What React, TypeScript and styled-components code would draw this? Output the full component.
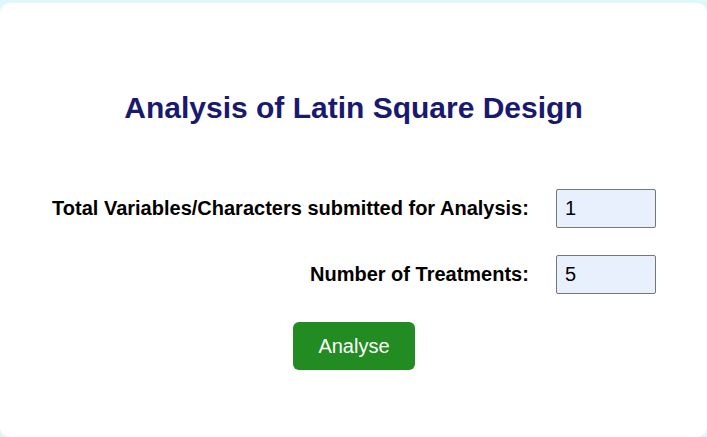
import React, { useState } from 'react';
import styled, { createGlobalStyle } from 'styled-components';

const GlobalStyle = createGlobalStyle`
  html, body {
    margin: 0;
    padding: 0;
    background: #e0f7fa;
    font-family: "Liberation Sans", Arial, sans-serif;
  }
`;

const Page = styled.div`
  padding-top: 3px;
`;

const Card = styled.div`
  background: #ffffff;
  border-radius: 10px;
  height: 434px;
  box-sizing: border-box;
  padding-top: 88px;
  display: flex;
  flex-direction: column;
  align-items: center;
`;

const Title = styled.h1`
  margin: 0;
  font-size: 30px;
  line-height: 34px;
  font-weight: 700;
  color: #191970;
  text-align: center;
`;

const Form = styled.form`
  margin-top: 64px;
  display: flex;
  flex-direction: column;
  align-items: center;
`;

const Fields = styled.div`
  display: grid;
  grid-template-columns: auto 100px;
  column-gap: 27px;
  row-gap: 27px;
  align-items: center;
  padding-left: 1px;
`;

const Label = styled.label`
  font-size: 20px;
  font-weight: 700;
  color: #000000;
  text-align: right;
  line-height: 23px;
`;

const NumberInput = styled.input`
  width: 100px;
  height: 39px;
  box-sizing: border-box;
  border: 1px solid #767676;
  border-radius: 2px;
  background: #e8f0fe;
  padding: 0 8px;
  font-family: "Liberation Sans", Arial, sans-serif;
  font-size: 20px;
  color: #000000;
  outline: none;
`;

const SubmitButton = styled.button`
  margin-top: 28px;
  margin-left: 1px;
  height: 48px;
  padding: 0 25px;
  border: none;
  border-radius: 6px;
  background: #228b22;
  color: #ffffff;
  font-family: "Liberation Sans", Arial, sans-serif;
  font-size: 20px;
  cursor: pointer;
`;

export default function App() {
  const [vars, setVars] = useState('1');
  const [treatments, setTreatments] = useState('5');

  return (
    <Page>
      <GlobalStyle />
      <Card>
        <Title>Analysis of Latin Square Design</Title>
        <Form onSubmit={(e) => e.preventDefault()}>
          <Fields>
            <Label htmlFor="vars">Total Variables/Characters submitted for Analysis:</Label>
            <NumberInput id="vars" value={vars} onChange={(e) => setVars(e.target.value)} />
            <Label htmlFor="treatments">Number of Treatments:</Label>
            <NumberInput
              id="treatments"
              value={treatments}
              onChange={(e) => setTreatments(e.target.value)}
            />
          </Fields>
          <SubmitButton type="submit">Analyse</SubmitButton>
        </Form>
      </Card>
    </Page>
  );
}
